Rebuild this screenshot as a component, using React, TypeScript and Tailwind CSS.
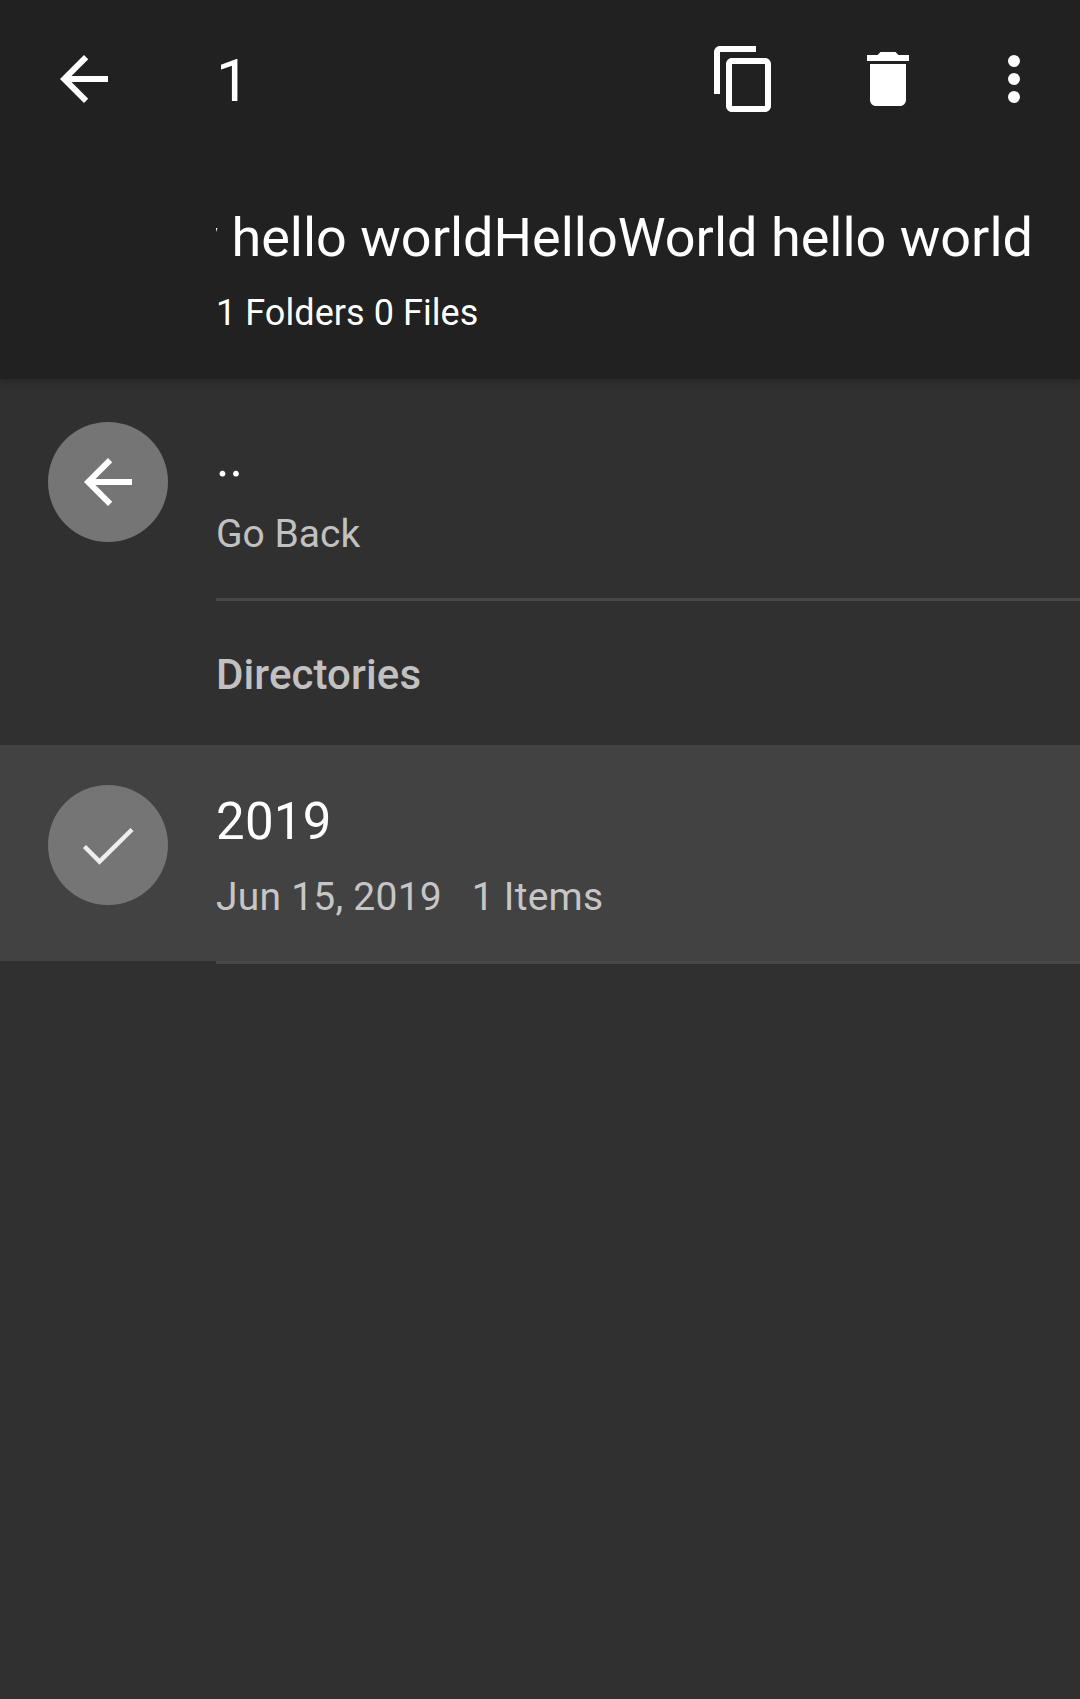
const Back = () => (
  <svg viewBox="0 0 24 24" className="size-[72px] shrink-0 fill-white"><path d="M20 11H7.83l5.59-5.59L12 4l-8 8 8 8 1.41-1.41L7.83 13H20v-2z" /></svg>
);

export default function App() {
  return (
    <main className="h-[1699px] w-[1080px] overflow-hidden bg-[#303030] font-['Roboto',sans-serif] text-white">
      <header className="h-[379px] bg-[#212121] shadow-[0_2px_8px_rgba(0,0,0,0.25)]">
        <div className="flex h-[158px] items-center pl-12">
          <Back />
          <h1 className="ml-24 w-[492px] pt-[4px] text-[60px] leading-[72px]">1</h1>
          <svg viewBox="0 0 24 24" className="size-[72px] fill-white"><path d="M16 1H4c-1.1 0-2 .9-2 2v14h2V3h12V1zm3 4H8c-1.1 0-2 .9-2 2v14c0 1.1.9 2 2 2h11c1.1 0 2-.9 2-2V7c0-1.1-.9-2-2-2zm0 16H8V7h11v14z" /></svg>
          <svg viewBox="0 0 24 24" className="ml-[72px] size-[72px] fill-white"><path d="M6 19c0 1.100.9 2 2 2h8c1.100 0 2-.9 2-2V7H6v12zM19 4h-3.500l-1-1h-5l-1 1H5v2h14V4z" /></svg>
          <svg viewBox="0 0 24 24" className="ml-[54px] size-[72px] fill-white"><path d="M12 8a2 2 0 1 0 0-4 2 2 0 0 0 0 4zm0 2a2 2 0 1 0 0 4 2 2 0 0 0 0-4zm0 6a2 2 0 1 0 0 4 2 2 0 0 0 0-4z" /></svg>
        </div>
        <div className="ml-[216px] mt-[42px] w-[817px]">
          <p className="flex justify-end overflow-hidden whitespace-pre text-[54px] leading-[76px]">y hello worldHelloWorld hello world</p>
          <p className="mt-[13px] text-[36px] leading-[48px] tracking-[0.06px]">1 Folders 0 Files</p>
        </div>
      </header>
      <section className="flex h-[222px]">
        <div className="ml-12 mt-[43px] flex size-[120px] items-center justify-center rounded-full bg-[#757575]"><Back /></div>
        <div className="ml-12 flex-1 border-b-3 border-[#484848] pt-[50px]">
          <p className="text-[51px] leading-[60px]">..</p>
          <p className="mt-[21px] text-[39px] leading-[48px] text-[#c1c1c1]">Go Back</p>
        </div>
      </section>
      <h2 className="flex h-[144px] items-center pl-[216px] pt-0.5 text-[42px] font-medium tracking-[0.1px] text-[#c1c1c1]">Directories</h2>
      <section className="flex h-[216px] bg-[#424242]">
        <div className="ml-12 mt-10 flex size-[120px] items-center justify-center rounded-full bg-[#757575]">
          <svg viewBox="0 0 52 38" className="mt-px w-[52px] fill-none stroke-[#eeeeee] stroke-[4.5]"><path d="m2.500 19.500 15 15L50 2.500" /></svg>
        </div>
        <div className="ml-12 flex-1 pt-[47px]">
          <p className="text-[51px] leading-[60px] tracking-[0.25px]">2019</p>
          <p className="mt-[21px] whitespace-pre text-[39px] leading-[48px] tracking-[0.24px] text-[#c6c6c6]">Jun 15, 2019   1 Items</p>
        </div>
      </section>
      <div className="ml-[216px] h-[3px] bg-[#484848]" />
    </main>
  );
}
